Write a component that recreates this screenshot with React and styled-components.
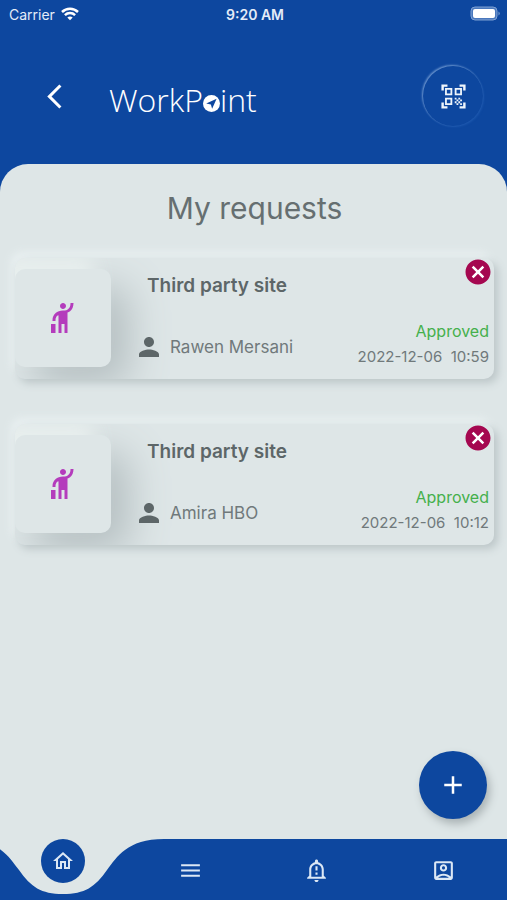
import React from "react";
import styled, { createGlobalStyle } from "styled-components";
import {
    MdAdd,
    MdArrowBackIosNew,
    MdCancel,
    MdHail,
    MdMenu,
    MdOutlineAccountBox,
    MdOutlineHome,
    MdOutlineNotificationImportant,
    MdPerson,
    MdQrCodeScanner,
} from "react-icons/md";

const BLUE = "#0d479f";
const PAPER = "#dee6e7";

const GlobalStyle = createGlobalStyle`
    * {
        box-sizing: border-box;
    }

    body {
        margin: 0;
        background: ${BLUE};
        font-family: Inter, "Liberation Sans", sans-serif;
    }

    button {
        padding: 0;
        border: 0;
        background: transparent;
        cursor: pointer;
    }
`;

const Screen = styled.div`
    display: flex;
    flex-direction: column;
    min-height: 100vh;
    background: ${BLUE};
`;

const StatusBar = styled.div`
    display: grid;
    grid-template-columns: 1fr auto 1fr;
    align-items: center;
    height: 28px;
    padding: 0 6px 0 9px;
    color: #e4ecf8;
    font-size: 14px;
`;

const Carrier = styled.div`
    display: flex;
    align-items: center;
    gap: 6px;
`;

const Time = styled.div`
    font-weight: 600;
`;

const Battery = styled.svg`
    justify-self: end;
`;

const Header = styled.header`
    display: flex;
    align-items: center;
    height: 136px;
    padding: 0 24px 0 40px;
    color: white;
`;

const BackButton = styled.button`
    display: flex;
    color: white;
`;

const Logo = styled.div`
    display: flex;
    align-items: center;
    flex: 1;
    padding: 8px 0 0 40px;
    font-family: "Open Sans", sans-serif;
    font-size: 32px;
    font-weight: 300;
    line-height: 40px;
`;

const LogoMark = styled.svg`
    margin-top: 6px;
`;

const ScanButton = styled.button`
    display: flex;
    align-items: center;
    justify-content: center;
    width: 60px;
    height: 60px;
    border-radius: 50%;
    background: ${BLUE};
    color: #eef5fb;
    box-shadow: -1px -1px 2px #6b95cf, 1px 1px 2px #1c57ae;
`;

const Content = styled.main`
    position: relative;
    flex: 1;
    padding: 22px 13px 100px 15px;
    border-radius: 28px 28px 0 0;
    background: ${PAPER};
`;

const Title = styled.h1`
    margin: 0 0 28px;
    color: #666f71;
    font-size: 30px;
    font-weight: 400;
    line-height: 44px;
    text-align: center;
`;

const RequestList = styled.ul`
    display: flex;
    flex-direction: column;
    gap: 45px;
    margin: 0;
    padding: 0;
    list-style: none;
`;

const Card = styled.li`
    display: flex;
    height: 121px;
    padding: 11px 0 12px;
    overflow: hidden;
    border-radius: 10px;
    background: ${PAPER};
    box-shadow: 4px 4px 8px #bcc6c8, -4px -6px 8px #e9f0f1;
`;

const Tile = styled.div`
    display: flex;
    align-items: center;
    justify-content: center;
    width: 96px;
    border-radius: 10px;
    background: ${PAPER};
    color: #b43cbc;
    box-shadow: -16px -14px 20px #e8efee, 18px 18px 40px #b4bec0;
`;

const Summary = styled.div`
    display: flex;
    flex: 1;
    flex-direction: column;
    justify-content: space-between;
    padding: 5px 0 5px 23px;
`;

const RequestName = styled.h2`
    margin: 0;
    padding-left: 13px;
    color: #5d6668;
    font-size: 19px;
    font-weight: 600;
    line-height: 24px;
`;

const Person = styled.div`
    display: flex;
    align-items: center;
    gap: 6px;
    color: #70797b;
    font-size: 17px;
    line-height: 26px;

    svg {
        color: #5d6668;
    }
`;

const Meta = styled.div`
    display: flex;
    flex-direction: column;
    align-items: flex-end;
    justify-content: flex-end;
    padding-right: 5px;
    color: #70797b;
    font-size: 15px;
    line-height: 20px;
    white-space: pre;
`;

const CancelButton = styled.button`
    display: flex;
    margin: -12px -4px auto 0;
    color: #a50850;
    background: radial-gradient(white 8px, transparent 9px);
`;

const Status = styled.div`
    color: #45b04c;
    font-size: 16px;
    line-height: 32px;
`;

const AddButton = styled.button`
    position: absolute;
    right: 20px;
    bottom: 20px;
    display: flex;
    align-items: center;
    justify-content: center;
    width: 68px;
    height: 68px;
    border-radius: 50%;
    background: ${BLUE};
    color: white;
    box-shadow: 3px 5px 9px #aab3b5;
`;

const TabBar = styled.nav`
    display: grid;
    grid-template-columns: repeat(4, 1fr);
    height: 61px;
    overflow-x: clip;
    background: ${BLUE};
`;

const Tab = styled.button`
    position: relative;
    display: flex;
    align-items: center;
    justify-content: center;
    padding-bottom: 3px;
    color: #dce8f5;
`;

const Notch = styled.svg`
    position: absolute;
    top: 0;
    left: 50%;
    margin-left: -101px;
`;

const ActiveCircle = styled.span`
    position: relative;
    display: flex;
    align-items: center;
    justify-content: center;
    width: 44px;
    height: 44px;
    margin-bottom: 18px;
    border-radius: 50%;
    background: ${BLUE};
`;

const requests = [
    { id: 1, name: "Third party site", person: "Rawen Mersani", status: "Approved", date: "2022-12-06", time: "10:59" },
    { id: 2, name: "Third party site", person: "Amira HBO", status: "Approved", date: "2022-12-06", time: "10:12" },
];

const tabs = [
    { label: "Menu", Icon: MdMenu },
    { label: "Notifications", Icon: MdOutlineNotificationImportant },
    { label: "Account", Icon: MdOutlineAccountBox },
];

const WifiIcon = () => (
    <svg width="18" height="14" viewBox="0 0 18 14" fill="none" stroke="white" strokeWidth="2.5">
        <path d="M1 5C5.5 .6 12.500 .6 17 5" />
        <path d="M3.900 8.100C6.800 5.300 11.200 5.300 14.100 8.100" />
        <path d="M6.300 10.400C7.900 9.100 10.100 9.100 11.700 10.400L9 13.300Z" fill="white" stroke="none" />
    </svg>
);

const Request = ({ name, person, status, date, time }) => (
    <Card>
        <Tile>
            <MdHail size={36} />
        </Tile>
        <Summary>
            <RequestName>{name}</RequestName>
            <Person>
                <MdPerson size={30} />
                {person}
            </Person>
        </Summary>
        <Meta>
            <CancelButton aria-label="Cancel request">
                <MdCancel size={30} />
            </CancelButton>
            <Status>{status}</Status>
            <div>{date}  {time}</div>
        </Meta>
    </Card>
);

const App = () => (
    <>
        <GlobalStyle />
        <Screen>
            <StatusBar>
                <Carrier>
                    Carrier
                    <WifiIcon />
                </Carrier>
                <Time>9:20 AM</Time>
                <Battery width="31" height="16" viewBox="0 0 31 16">
                    <rect x="1" y="1" width="26" height="13" rx="4" fill="#4a78bd" stroke="#7fa1d3" />
                    <rect x="3" y="3" width="22" height="9" rx="2" fill="white" />
                    <path d="M28.500 5.500Q31 7.500 28.500 9.500Z" fill="#7fa1d3" />
                </Battery>
            </StatusBar>
            <Header>
                <BackButton aria-label="Back">
                    <MdArrowBackIosNew size={29} />
                </BackButton>
                <Logo>
                    WorkP
                    <LogoMark width="17" height="17" viewBox="0 0 16 16">
                        <circle cx="8" cy="8" r="8" fill="white" />
                        <path d="M12.800 3.600L8.600 13L7.400 8.900L3 7.900Z" fill={BLUE} />
                    </LogoMark>
                    int
                </Logo>
                <ScanButton aria-label="Scan code">
                    <MdQrCodeScanner size={29} />
                </ScanButton>
            </Header>
            <Content>
                <Title>My requests</Title>
                <RequestList>
                    {requests.map((request) => (
                        <Request key={request.id} {...request} />
                    ))}
                </RequestList>
                <AddButton aria-label="New request">
                    <MdAdd size={30} />
                </AddButton>
            </Content>
            <TabBar>
                <Tab aria-label="Home">
                    <Notch width="202" height="61" viewBox="0 0 202 61">
                        <path
                            d="M0 0C37 0 47 18 57 31C69 48 79 55 101 55C123 55 133 48 145 31C155 18 165 0 202 0Z"
                            fill={PAPER}
                        />
                    </Notch>
                    <ActiveCircle>
                        <MdOutlineHome size={24} />
                    </ActiveCircle>
                </Tab>
                {tabs.map(({ label, Icon }) => (
                    <Tab key={label} aria-label={label}>
                        <Icon size={25} />
                    </Tab>
                ))}
            </TabBar>
        </Screen>
    </>
);

export default App;
